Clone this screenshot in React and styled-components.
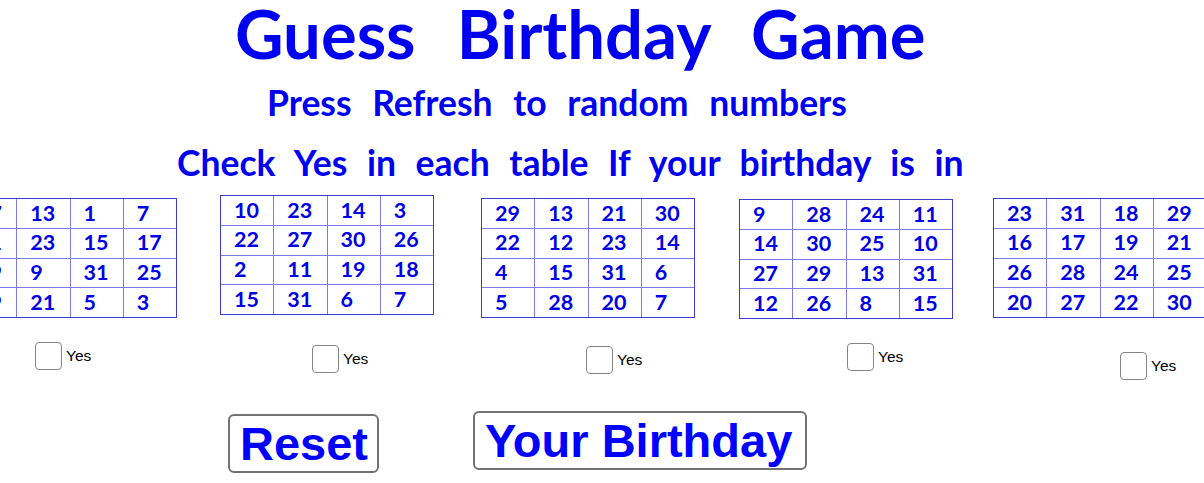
import React from "react";
import styled, { createGlobalStyle } from "styled-components";

const Global = createGlobalStyle`
  html, body { margin: 0; padding: 0; background: #ffffff; }
  body { width: 1204px; height: 483px; overflow: hidden; }
`;

/* The GeoGebra graphics view: every object sits at its own coordinates. */
const Canvas = styled.div`
  position: relative;
  width: 1204px;
  height: 483px;
  overflow: hidden;
  background: #ffffff;
`;

const TextObject = styled.div`
  position: absolute;
  left: ${(p) => p.$x}px;
  top: ${(p) => p.$y}px;
  margin: 0;
  white-space: nowrap;
  font-family: "Lato", "Open Sans", sans-serif;
  font-weight: 700;
  font-size: ${(p) => p.$size}px;
  line-height: ${(p) => p.$lh};
  word-spacing: ${(p) => p.$gap}px;
  color: #0000f0;
`;

const NumberTable = styled.div`
  position: absolute;
  left: ${(p) => p.$x}px;
  top: ${(p) => p.$y}px;
  box-sizing: border-box;
  width: 214px;
  height: 120px;
  display: grid;
  grid-template-columns: repeat(4, 1fr);
  grid-template-rows: repeat(4, 1fr);
  gap: 1px;
  border: 1px solid #3c3cd4;
  background: #7c7ce8;
`;

const Cell = styled.div`
  background: #ffffff;
  display: flex;
  align-items: center;
  padding-left: 13px;
  font-family: "Lato", "Open Sans", sans-serif;
  font-weight: 700;
  font-size: 21.5px;
  line-height: 1;
  color: #0000e6;
`;

const CheckItem = styled.label`
  position: absolute;
  left: ${(p) => p.$x}px;
  top: ${(p) => p.$y}px;
  display: flex;
  align-items: center;
  gap: 4px;
  font-family: "Liberation Sans", Arial, sans-serif;
  font-size: 15.5px;
  color: #000000;
  cursor: pointer;
`;

const Box = styled.input.attrs({ type: "checkbox" })`
  appearance: none;
  -webkit-appearance: none;
  margin: 0;
  box-sizing: border-box;
  width: 27px;
  height: 28px;
  border: 1.5px solid #858585;
  border-radius: 4px;
  background: #ffffff;
  &:checked {
    background: #ffffff
      radial-gradient(circle, #333 0 5px, transparent 6px);
  }
`;

const ActionButton = styled.button`
  position: absolute;
  left: ${(p) => p.$x}px;
  top: ${(p) => p.$y}px;
  box-sizing: border-box;
  width: ${(p) => p.$w}px;
  height: ${(p) => p.$h}px;
  margin: 0;
  padding: 0 0 0 10px;
  display: flex;
  align-items: center;
  border: 2px solid #727272;
  border-radius: 6px;
  background: #ffffff;
  font-family: "Liberation Sans", Arial, sans-serif;
  font-weight: 700;
  font-size: 47px;
  line-height: 1;
  color: #0000ff;
  cursor: pointer;
`;

const texts = [
  { t: "Guess Birthday Game", x: 235, y: 0, size: 67, gap: 25, lh: 1 },
  { t: "Press Refresh to random numbers", x: 267, y: 83, size: 35.5, gap: 12, lh: 1.15 },
  { t: "Check Yes in each table If your birthday is in", x: 177, y: 143, size: 35.5, gap: 11, lh: 1.15 },
];

const tables = [
  { x: -37, y: 198, rows: [["27", "13", "1", "7"], ["11", "23", "15", "17"], ["29", "9", "31", "25"], ["19", "21", "5", "3"]] },
  { x: 220, y: 195, rows: [["10", "23", "14", "3"], ["22", "27", "30", "26"], ["2", "11", "19", "18"], ["15", "31", "6", "7"]] },
  { x: 481, y: 198, rows: [["29", "13", "21", "30"], ["22", "12", "23", "14"], ["4", "15", "31", "6"], ["5", "28", "20", "7"]] },
  { x: 739, y: 199, rows: [["9", "28", "24", "11"], ["14", "30", "25", "10"], ["27", "29", "13", "31"], ["12", "26", "8", "15"]] },
  { x: 993, y: 198, rows: [["23", "31", "18", "29"], ["16", "17", "19", "21"], ["26", "28", "24", "25"], ["20", "27", "22", "30"]] },
];

const checks = [
  { x: 35, y: 342 },
  { x: 312, y: 345 },
  { x: 586, y: 346 },
  { x: 847, y: 343 },
  { x: 1120, y: 352 },
];

const buttons = [
  { label: "Reset", x: 228, y: 414, w: 151, h: 59 },
  { label: "Your Birthday", x: 473, y: 411, w: 334, h: 59 },
];

export default function App() {
  return (
    <>
      <Global />
      <Canvas>
        {texts.map((s, i) => (
          <TextObject key={i} $x={s.x} $y={s.y} $size={s.size} $gap={s.gap} $lh={s.lh}>
            {s.t}
          </TextObject>
        ))}
        {tables.map((tb, i) => (
          <NumberTable key={i} $x={tb.x} $y={tb.y}>
            {tb.rows.flat().map((n, j) => (
              <Cell key={j}>{n}</Cell>
            ))}
          </NumberTable>
        ))}
        {checks.map((c, i) => (
          <CheckItem key={i} $x={c.x} $y={c.y}>
            <Box />
            Yes
          </CheckItem>
        ))}
        {buttons.map((b, i) => (
          <ActionButton key={i} $x={b.x} $y={b.y} $w={b.w} $h={b.h}>
            {b.label}
          </ActionButton>
        ))}
      </Canvas>
    </>
  );
}
